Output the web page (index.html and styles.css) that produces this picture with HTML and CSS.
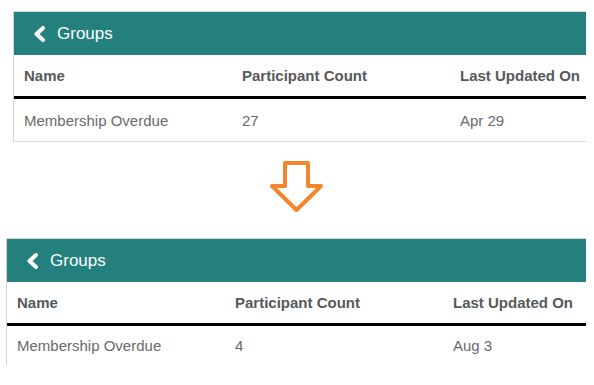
FILE: index.html
```html
<!DOCTYPE html>
<html lang="en">

<head>
    <meta charset="UTF-8">
    <meta name="viewport" content="width=device-width, initial-scale=1.0">
    <title>Groups</title>
    <link rel="stylesheet" href="styles.css">
</head>

<body>
    <div class="panel before">
        <div class="panel-head">
            <svg class="back" width="13" height="16" viewBox="0 0 13 16">
                <polyline points="10,2 3.5,8 10,14" />
            </svg>
            <span>Groups</span>
        </div>
        <div class="row head-row">
            <div class="cell">Name</div>
            <div class="cell">Participant Count</div>
            <div class="cell">Last Updated On</div>
        </div>
        <div class="row data-row">
            <div class="cell">Membership Overdue</div>
            <div class="cell">27</div>
            <div class="cell">Apr 29</div>
        </div>
    </div>

    <svg class="arrow" width="56" height="56" viewBox="0 0 56 56">
        <polygon points="16,4 39,4 39,27 52,27 27.5,51 3,27 16,27" />
    </svg>

    <div class="panel after">
        <div class="panel-head">
            <svg class="back" width="13" height="16" viewBox="0 0 13 16">
                <polyline points="10,2 3.5,8 10,14" />
            </svg>
            <span>Groups</span>
        </div>
        <div class="row head-row">
            <div class="cell">Name</div>
            <div class="cell">Participant Count</div>
            <div class="cell">Last Updated On</div>
        </div>
        <div class="row data-row">
            <div class="cell">Membership Overdue</div>
            <div class="cell">4</div>
            <div class="cell">Aug 3</div>
        </div>
    </div>
</body>

</html>
```

FILE: styles.css
```css
* {
    box-sizing: border-box;
}

body {
    margin: 0px;
    padding-top: 11px;
    background: #fff;
    font-family: "Liberation Sans", Arial, sans-serif;
}

.panel {
    overflow: hidden;
    border-top: 1px solid #d6d6d6;
    border-left: 1px solid #d6d6d6;
}

.before {
    margin-left: 13px;
    width: 573px;
    border-bottom: 1px solid #dcdcdc;
}

.after {
    margin-left: 6px;
    width: 580px;
}

.panel-head {
    height: 43px;
    background: #23807c;
    color: #fff;
    display: flex;
    align-items: center;
    padding-left: 19px;
    font-size: 17px;
}

.back {
    margin-right: 11px;
}

.back polyline {
    fill: none;
    stroke: #fff;
    stroke-width: 4;
    stroke-linejoin: round;
    stroke-linecap: round;
}

.row {
    display: flex;
    align-items: center;
    font-size: 15px;
    white-space: nowrap;
}

.cell {
    flex: 0 0 218px;
    padding-left: 10px;
}

.head-row {
    height: 44px;
    font-weight: bold;
    color: #58595b;
    border-bottom: 3px solid #000;
}

.data-row {
    height: 42px;
    color: #6a6a6a;
}

.after .data-row {
    height: 39px;
}

.arrow {
    display: block;
    margin: 17px auto 23px;
}

.arrow polygon {
    fill: #fff;
    stroke: #f5842a;
    stroke-width: 4;
    stroke-linejoin: round;
}
```
